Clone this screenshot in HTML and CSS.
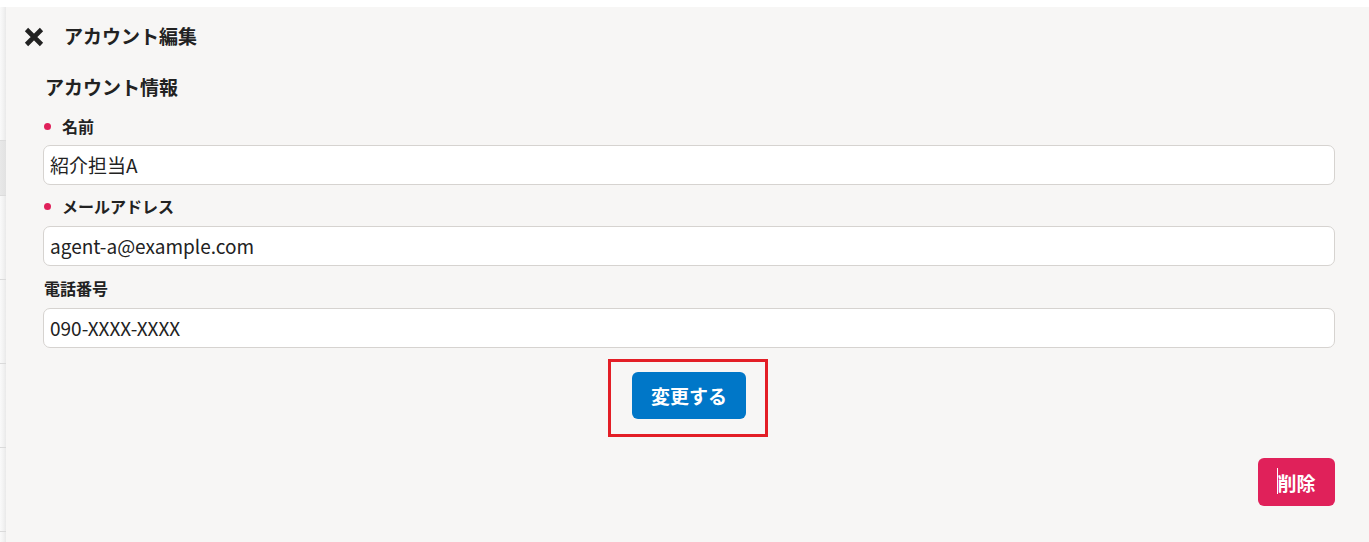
FILE: index.html
```html
<!DOCTYPE html>
<html lang="ja">
<head>
<meta charset="utf-8">
<title>アカウント編集</title>
<link rel="stylesheet" href="styles.css">
</head>
<body>
<div class="topbar"></div>
<div class="layout">
  <div class="behind">
    <div class="behind-head"></div>
    <div class="behind-sel"></div>
    <div class="behind-row"></div>
    <div class="behind-row"></div>
    <div class="behind-row"></div>
    <div class="behind-row"></div>
  </div>
  <div class="panel">
    <div class="panel-head">
      <svg class="close-icon" viewBox="0 0 20 20" width="20" height="20" aria-hidden="true">
        <path d="M2.5 2.5 L17.5 17.5 M17.5 2.5 L2.5 17.5" stroke="#222" stroke-width="4.6" stroke-linecap="butt" fill="none"/>
      </svg>
      <h1 class="panel-title">アカウント編集</h1>
    </div>
    <div class="panel-body">
      <h2 class="section-title">アカウント情報</h2>
      <div class="field">
        <label class="label required">名前</label>
        <div class="input">紹介担当A</div>
      </div>
      <div class="field">
        <label class="label required">メールアドレス</label>
        <div class="input">agent-a@example.com</div>
      </div>
      <div class="field">
        <label class="label">電話番号</label>
        <div class="input">090-XXXX-XXXX</div>
      </div>
      <div class="actions">
        <button class="btn btn-primary highlighted">変更する</button>
      </div>
      <div class="danger-row">
        <button class="btn btn-danger"><span class="caret"></span>削除</button>
      </div>
    </div>
  </div>
</div>
</body>
</html>
```

FILE: styles.css
```css
* { box-sizing: border-box; }
html, body {
  margin: 0;
  padding: 0;
  height: 100%;
}
body {
  font-family: "Noto Sans CJK JP", "Noto Sans", sans-serif;
  color: #222;
  background: #fff;
  overflow: hidden;
}
.topbar {
  height: 7px;
  background: #fff;
}
.layout {
  display: flex;
  height: 535px;
}
.behind {
  width: 6px;
  flex: none;
  background: linear-gradient(to right, #fafafa 0, #f3f3f3 3px, #e9e9e9 6px);
  display: flex;
  flex-direction: column;
}
.behind-head {
  height: 133px;
}
.behind-sel {
  height: 56px;
  background: linear-gradient(to right, #e8e8e8 0, #e2e2e2 6px);
  border-top: 1px solid #dcdcdc;
  border-bottom: 1px solid #dcdcdc;
}
.behind-row {
  height: 84px;
  border-bottom: 1px solid #dadada;
}
.panel {
  flex: 1;
  background: #f7f6f5;
  display: flex;
  flex-direction: column;
}
.panel-head {
  display: flex;
  align-items: center;
  gap: 20px;
  padding: 9px 0 0 18px;
  height: 49px;
}
.close-icon {
  display: block;
  margin-top: 1px;
}
.panel-title {
  margin: 0;
  font-size: 19px;
  font-weight: 700;
  line-height: 24px;
}
.panel-body {
  padding: 18px 34px 0 37px;
}
.section-title {
  margin: 0 0 16px 2px;
  font-size: 19px;
  font-weight: 700;
  line-height: 26px;
}
.field {
  margin-bottom: 12px;
}
.field:first-of-type {
  margin-bottom: 11px;
}
.label {
  display: flex;
  align-items: center;
  font-size: 16px;
  font-weight: 700;
  line-height: 20px;
  padding-left: 19px;
  margin-bottom: 10px;
  position: relative;
}
.section-title + .field .label {
  margin-bottom: 9px;
}
.label:not(.required) {
  padding-left: 1px;
}
.label.required::before {
  content: "";
  position: absolute;
  left: 1px;
  top: 7px;
  width: 7px;
  height: 7px;
  border-radius: 50%;
  background: #e0215a;
}
.input {
  height: 40px;
  background: #fff;
  border: 1px solid #d6d3d0;
  border-radius: 7px;
  padding: 0 6px;
  font-size: 19px;
  line-height: 38px;
  color: #222;
}
.actions {
  display: flex;
  justify-content: center;
  padding-top: 12px;
}
.btn {
  font-family: inherit;
  border: none;
  color: #fff;
  font-weight: 700;
  font-size: 19px;
  border-radius: 6px;
  cursor: pointer;
}
.btn-primary {
  background: #0077c8;
  width: 114px;
  height: 47px;
}
.highlighted {
  position: relative;
}
.highlighted::after {
  content: "";
  position: absolute;
  left: -24px;
  right: -22px;
  top: -13px;
  bottom: -18px;
  border: 3px solid #e31e26;
}
.danger-row {
  display: flex;
  justify-content: flex-end;
  padding-top: 39px;
}
.btn-danger {
  background: #e0215a;
  width: 77px;
  height: 48px;
  display: flex;
  align-items: center;
  justify-content: center;
  padding: 0;
}
.caret {
  display: inline-block;
  width: 1px;
  height: 26px;
  background: #fff;
  margin-right: -1px;
  margin-top: -2px;
}
```
